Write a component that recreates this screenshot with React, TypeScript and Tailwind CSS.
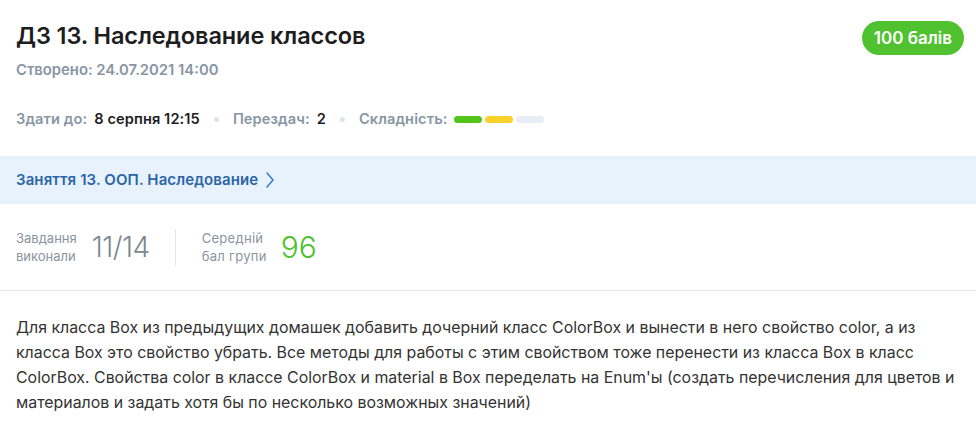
const difficulty = ["bg-[#52c41a]", "bg-[#fad02c]", "bg-[#e8eef5]"];

function Dot() {
  return <span className="mx-[14px] inline-block h-[5px] w-[5px] rounded-full bg-[#dde3ea]" />;
}

export default function App() {
  return (
    <div className="w-[976px] bg-white font-['Inter','Noto_Sans',sans-serif]">
      <div className="flex items-start justify-between pl-4 pr-3 pt-[21px]">
        <div>
          <h1 className="text-[23.5px] font-semibold leading-[30px] tracking-[-0.1px] text-[#1d1d1f]">
            ДЗ 13. Наследование классов
          </h1>
          <p className="mt-[12px] text-[14.8px] font-semibold leading-none text-[#8896a4]">
            Створено: 24.07.2021 14:00
          </p>
        </div>
        <span className="rounded-full bg-[#50c22f] px-[12px] py-[7px] text-[17px] font-semibold leading-5 text-white">
          100 балів
        </span>
      </div>

      <div className="mt-[34px] flex items-center px-4 text-[14.6px] font-semibold leading-none tracking-[0.1px]">
        <span className="text-[#8896a4]">Здати до:</span>
        <span className="ml-[7px] text-[#1d1d1f]">8 серпня 12:15</span>
        <Dot />
        <span className="text-[#8896a4]">Перездач:</span>
        <span className="ml-[7px] text-[#1d1d1f]">2</span>
        <Dot />
        <span className="text-[#8896a4]">Складність:</span>
        <div className="ml-[7px] flex gap-[3px]">
          {difficulty.map((c) => (
            <span key={c} className={`h-[7px] w-[28px] rounded-full ${c}`} />
          ))}
        </div>
      </div>

      <div className="mt-[30px] flex h-[48px] items-center bg-[#e8f2fc] px-4">
        <span className="text-[15px] font-semibold tracking-[0.1px] text-[#2c64a8]">Заняття 13. ООП. Наследование</span>
        <svg className="ml-[7px]" width="10" height="18" viewBox="0 0 10 18" fill="none">
          <path d="M2 2l6 7-6 7" stroke="#3d7cc4" strokeWidth="1.6" strokeLinecap="round" strokeLinejoin="round" />
        </svg>
      </div>

      <div className="flex h-[87px] items-center border-b border-[#e3e6ea] px-4">
        <div className="flex items-center">
          <p className="text-[13px] leading-[18px] text-[#8a949e]">
            Завдання
            <br />
            виконали
          </p>
          <span className="ml-[15px] text-[28px] font-light tracking-[-0.5px] text-[#7c8690]">11/14</span>
        </div>
        <div className="ml-[25px] mr-[26px] h-[37px] w-px bg-[#e3e6ea]" />
        <div className="flex items-center">
          <p className="text-[13px] leading-[18px] tracking-[0.3px] text-[#8a949e]">
            Середній
            <br />
            бал групи
          </p>
          <span className="ml-[14px] text-[30px] font-light text-[#4cc22c]">96</span>
        </div>
      </div>

      <p className="px-4 pt-[24px] text-[15.9px] leading-[25px] text-[#333]">
        Для класса Box из предыдущих домашек добавить дочерний класс ColorBox и вынести в него свойство color, а из
        <br />
        класса Box это свойство убрать. Все методы для работы с этим свойством тоже перенести из класса Box в класс
        <br />
        ColorBox. Свойства color в классе ColorBox и material в Box переделать на Enum'ы (создать перечисления для цветов и
        <br />
        материалов и задать хотя бы по несколько возможных значений)
      </p>
      <div className="h-[20px]" />
    </div>
  );
}
